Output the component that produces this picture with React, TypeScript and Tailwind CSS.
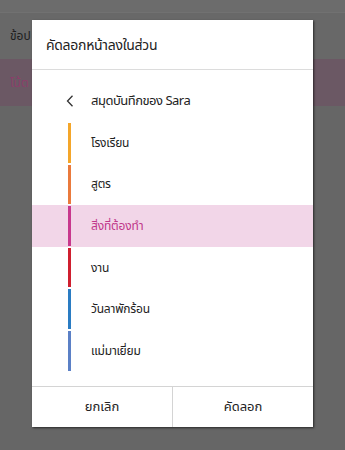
import React from "react";

const items = [
  { label: "โรงเรียน", color: "bg-[#f4a62a]" },
  { label: "สูตร", color: "bg-[#ea7a3c]" },
  { label: "สิ่งที่ต้องทำ", color: "bg-[#c8388d]", active: true },
  { label: "งาน", color: "bg-[#cf1f2f]" },
  { label: "วันลาพักร้อน", color: "bg-[#2a7cc3]" },
  { label: "แม่มาเยี่ยม", color: "bg-[#5b80c6]" },
];

export default function App() {
  return (
    <div
      className="relative w-[345px] h-[450px] overflow-hidden bg-[#666666]"
      style={{ fontFamily: '"Noto Sans", "Noto Sans Thai", "Leelawadee UI", sans-serif' }}
    >
      {/* underlying page (dimmed) */}
      <div className="flex flex-col">
        <div className="h-[13px] bg-[#6c6c6c] border-b border-[#717171]" />
        <div className="h-[46px] bg-[#686868] flex items-center pl-[10px]">
          <span className="text-[12px] text-[#1e1e1e]">ข้อป</span>
        </div>
        <div className="h-[47px] bg-[#6b5864] flex items-center pl-[10px]">
          <span className="text-[12px] text-[#8a3f6a]">โน้ต</span>
        </div>
      </div>

      {/* dialog */}
      <div className="absolute left-[32px] top-[20px] w-[281px] h-[407px] bg-white flex flex-col shadow-[1px_1px_2px_rgba(0,0,0,0.6)]">
        <div className="h-[50px] flex items-center pl-[14px] text-[14px] tracking-[-0.3px] text-[#222] border-b border-[#dcdcdc]">
          คัดลอกหน้าลงในส่วน
        </div>
        <div className="flex-1 flex flex-col">
          <div className="h-[52px] flex items-center pl-[34px] pt-[10px]">
            <svg width="8" height="12" viewBox="0 0 8 12" className="mr-[17px]">
              <path d="M6.5 0.8 L1.5 6 L6.5 11.2" fill="none" stroke="#333" strokeWidth="1.3" />
            </svg>
            <span className="text-[13px] tracking-[-0.5px] text-[#222]">สมุดบันทึกของ Sara</span>
          </div>
          {items.map((it) => (
            <div
              key={it.label}
              className={`h-[41.6px] flex items-stretch ${it.active ? "bg-[#f2d6e8]" : ""}`}
            >
              <div className="pl-[36px] py-[1px] flex">
                <div className={`w-[3px] ${it.color}`} />
              </div>
              <div
                className={`flex items-center pl-[20px] text-[12px] tracking-[-0.2px] ${
                  it.active ? "text-[#c0378a]" : "text-[#222]"
                }`}
              >
                {it.label}
              </div>
            </div>
          ))}
        </div>
        <div className="h-[41px] flex border-t border-[#d4d4d4]">
          <div className="flex-1 flex items-center justify-center text-[13px] text-[#222] border-r border-[#d4d4d4]">
            ยกเลิก
          </div>
          <div className="flex-1 flex items-center justify-center text-[13px] text-[#222]">
            คัดลอก
          </div>
        </div>
      </div>
    </div>
  );
}
